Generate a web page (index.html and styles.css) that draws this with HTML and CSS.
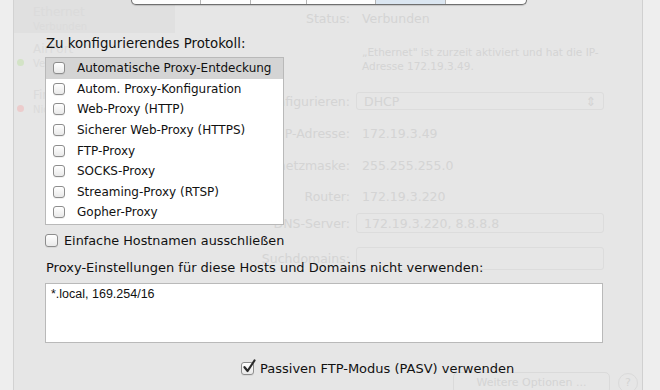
FILE: index.html
```
<!DOCTYPE html>
<html>

<head>

	<title>Netzwerk - Proxies</title>

	<link rel="stylesheet" href="styles.css">
</head>

<body>

	<div class="stage">

		<!-- faded window behind the sheet -->
		<div class="window">
			<div class="edge edgeLeft"></div>

			<div class="sidebar">
				<div class="service selected">
					<span class="dot green"></span>
					<div>
						<div class="svcName">Ethernet</div>
						<div class="svcState">Verbunden</div>
					</div>
				</div>
				<div class="service">
					<span class="dot green"></span>
					<div>
						<div class="svcName">AirPort</div>
						<div class="svcState">Verbunden</div>
					</div>
				</div>
				<div class="service">
					<span class="dot red"></span>
					<div>
						<div class="svcName">FireWire</div>
						<div class="svcState">Nicht verbunden</div>
					</div>
				</div>
			</div>

			<div class="pane">
				<div class="row rowStatus">
					<span class="lbl">Status:</span>
					<span class="val strong">Verbunden</span>
				</div>
				<div class="row rowDesc">
					<span class="lbl"></span>
					<span class="val desc">„Ethernet" ist zurzeit aktiviert und hat die IP-Adresse 172.19.3.49.</span>
				</div>
				<div class="row rowConfig">
					<span class="lbl">Konfigurieren:</span>
					<span class="val box popup">DHCP <span class="arrows">&#8661;</span></span>
				</div>
				<div class="row rowIp">
					<span class="lbl">IP-Adresse:</span>
					<span class="val">172.19.3.49</span>
				</div>
				<div class="row rowMask">
					<span class="lbl">Teilnetzmaske:</span>
					<span class="val">255.255.255.0</span>
				</div>
				<div class="row rowRouter">
					<span class="lbl">Router:</span>
					<span class="val">172.19.3.220</span>
				</div>
				<div class="row rowDns">
					<span class="lbl">DNS-Server:</span>
					<span class="val box">172.19.3.220, 8.8.8.8</span>
				</div>
				<div class="row rowSearch">
					<span class="lbl">Suchdomains:</span>
					<span class="val box"></span>
				</div>
				<div class="paneFooter">
					<span class="btnMore">Weitere Optionen ...</span>
					<span class="btnHelp">?</span>
				</div>
			</div>

			<div class="edge edgeRight"></div>
		</div>

		<!-- proxy sheet -->
		<div class="sheet">
			<div class="tabs">
				<span class="tab t1"></span>
				<span class="tab t2"></span>
				<span class="tab t3"></span>
				<span class="tab t4"></span>
				<span class="tab t5 active"></span>
				<span class="tab t6"></span>
			</div>

			<div class="heading first">Zu konfigurierendes Protokoll:</div>

			<div class="protoList">
				<div class="proto current"><span class="check"></span>Automatische Proxy-Entdeckung</div>
				<div class="proto"><span class="check"></span>Autom. Proxy-Konfiguration</div>
				<div class="proto"><span class="check"></span>Web-Proxy (HTTP)</div>
				<div class="proto"><span class="check"></span>Sicherer Web-Proxy (HTTPS)</div>
				<div class="proto"><span class="check"></span>FTP-Proxy</div>
				<div class="proto"><span class="check"></span>SOCKS-Proxy</div>
				<div class="proto"><span class="check"></span>Streaming-Proxy (RTSP)</div>
				<div class="proto"><span class="check"></span>Gopher-Proxy</div>
			</div>

			<label class="option optHosts"><span class="check big"></span>Einfache Hostnamen ausschließen</label>

			<div class="heading bypassLabel">Proxy-Einstellungen für diese Hosts und Domains nicht verwenden:</div>

			<div class="bypass">*.local, 169.254/16</div>

			<label class="option optPasv">
				<span class="check big checked">
					<svg width="16" height="16" viewBox="0 0 16 16">
						<path d="M3.5 8.2 L6.6 12 L13.5 1.5" fill="none" stroke="#2a2a2a" stroke-width="2.2" stroke-linecap="round" stroke-linejoin="round"/>
					</svg>
				</span>Passiven FTP-Modus (PASV) verwenden
			</label>
		</div>

	</div>

</body>

</html>
```

FILE: styles.css
```
html, body {
	margin: 0;
	padding: 0;
	background: #e6e6e6;
	font-family: 'DejaVu Sans', sans-serif;
	font-size: 12px;
	color: #1c1c1c;
}

.stage {
	position: relative;
	width: 660px;
	height: 390px;
	overflow: hidden;
}

/* ---------- faded window ---------- */

.window {
	display: flex;
	height: 390px;
	color: #d4d4d4;
}

.edge {
	background: #eeeeee;
}
.edgeLeft {
	width: 13px;
	border-right: 1px solid #d2d2d2;
}
.edgeRight {
	width: 17px;
	border-left: 1px solid #d0d0d0;
}

.sidebar {
	width: 161px;
	display: flex;
	flex-direction: column;
	color: #dbdbdb;
}

.service {
	display: flex;
	align-items: center;
	gap: 9px;
	height: 46px;
	padding-left: 3px;
}
.service.selected {
	height: 33px;
	background: #e0e0e0;
	align-items: flex-end;
	padding-left: 19px;
}
.service.selected .dot {
	display: none;
}

.svcName {
	font-size: 12px;
	line-height: 15px;
}
.svcState {
	font-size: 10px;
	line-height: 13px;
}

.dot {
	width: 7px;
	height: 7px;
	border-radius: 50%;
	margin-top: 12px;
}
.dot.green {
	background: #d3e3c6;
}
.dot.red {
	background: #eccccc;
}

.pane {
	flex: 1;
	padding-top: 8px;
	display: flex;
	flex-direction: column;
}

.row {
	display: flex;
	align-items: center;
	gap: 10px;
}
.lbl {
	width: 175px;
	text-align: right;
	font-size: 12.5px;
}
.val {
	font-size: 12.5px;
	padding-left: 2px;
}
.box {
	width: 248px;
	height: 100%;
	box-sizing: border-box;
	border: 1px solid #dcdcdc;
	border-radius: 3px;
	padding: 0 7px;
	margin-left: -4px;
	display: flex;
	align-items: center;
}
.popup {
	justify-content: space-between;
}
.desc {
	width: 250px;
	line-height: 14px;
	font-size: 10.5px;
}

.rowStatus { height: 20px; }
.rowDesc { height: 30px; margin-top: 16px; }
.rowConfig { height: 18px; margin-top: 18px; }
.rowIp { height: 18px; margin-top: 14px; }
.rowMask { height: 18px; margin-top: 14px; }
.rowRouter { height: 18px; margin-top: 13px; }
.rowDns { height: 20px; margin-top: 8px; }
.rowSearch { height: 23px; margin-top: 14px; }

.paneFooter {
	margin-top: auto;
	display: flex;
	justify-content: flex-end;
	align-items: center;
	gap: 8px;
	padding-right: 4px;
	margin-bottom: -4px;
}
.btnMore {
	width: 155px;
	height: 20px;
	border: 1px solid #dadada;
	border-radius: 5px;
	text-align: center;
	line-height: 20px;
	font-size: 11px;
}
.btnHelp {
	width: 18px;
	height: 18px;
	border: 1px solid #dadada;
	border-radius: 50%;
	text-align: center;
	line-height: 18px;
	font-size: 11px;
}

/* ---------- sheet ---------- */

.sheet {
	position: absolute;
	top: 0;
	left: 0;
	right: 0;
	bottom: 0;
	padding-left: 45px;
	display: flex;
	flex-direction: column;
	align-items: flex-start;
}

.tabs {
	display: flex;
	margin-left: 86px;
	margin-top: -18px;
	height: 22px;
	border: 1px solid #6f6f6f;
	border-top: none;
	border-radius: 0 0 5px 5px;
	background: #fdfdfd;
	overflow: hidden;
	box-shadow: 0 1px 1px rgba(0, 0, 0, 0.15);
}
.tab {
	border-right: 1px solid #b4b4b4;
}
.tab:last-child {
	border-right: none;
}
.t1 { width: 68px; }
.t2 { width: 49px; }
.t3 { width: 55px; }
.t4 { width: 68px; }
.t5 { width: 69px; }
.t6 { width: 80px; }
.tab.active {
	background: #dbe6f1;
}

.heading {
	font-size: 13px;
	line-height: 16px;
	margin-top: 30px;
	margin-left: 1px;
	color: #111;
}
.heading.first {
	font-size: 13.3px;
	margin-top: 31px;
}

.protoList {
	margin-top: 5px;
	width: 237px;
	border: 1px solid #b9b9b9;
	background: #fff;
	padding: 0 0 1px 0;
}

.proto {
	display: flex;
	align-items: center;
	height: 20.6px;
	padding-left: 7px;
	gap: 12px;
	font-size: 12px;
	color: #111;
}
.proto.current {
	background: #d4d4d4;
}

.check {
	width: 10px;
	height: 10px;
	border: 1px solid #8d8d8d;
	border-radius: 3px;
	background: linear-gradient(#ffffff, #e9e9e9);
	box-shadow: 0 1px 0 rgba(0, 0, 0, 0.06);
	flex: none;
}
.check.big {
	width: 11px;
	height: 11px;
	position: relative;
}

.option {
	display: flex;
	align-items: center;
	gap: 6px;
	font-size: 12.8px;
	color: #111;
}
.optHosts {
	margin-top: 8px;
}

.bypassLabel {
	margin-top: 12px;
}

.bypass {
	margin-top: 7px;
	width: 546px;
	height: 50px;
	border: 1px solid #b9b9b9;
	background: #fff;
	padding: 4px 5px;
	font-family: 'Liberation Sans', sans-serif;
	font-size: 12.5px;
	line-height: 12px;
	color: #111;
}

.optPasv {
	margin-top: 18px;
	margin-left: 196px;
	font-size: 13px;
}
.check.checked svg {
	position: absolute;
	left: -1px;
	top: -4px;
}
```
